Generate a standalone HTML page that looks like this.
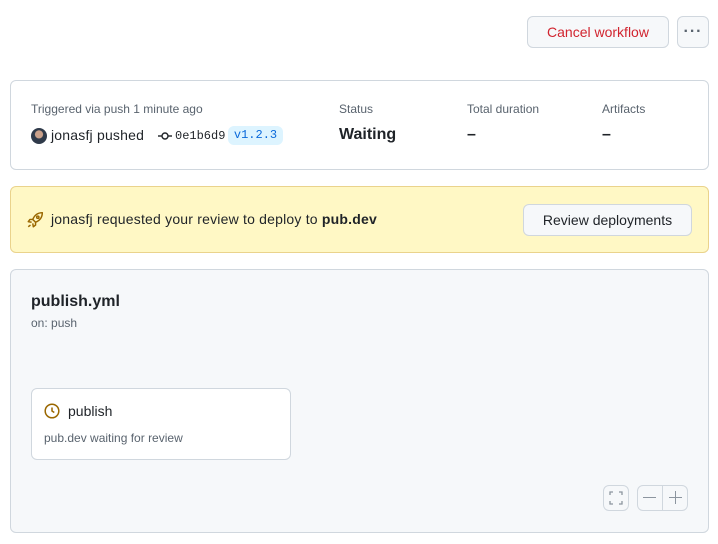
<!DOCTYPE html>
<html><head><style>
*{box-sizing:border-box;margin:0;padding:0}
body{width:718px;height:544px;background:#fff;font-family:"Liberation Sans",sans-serif;color:#1f2328;position:relative;overflow:hidden}
.a{position:absolute}
.btn{position:absolute;border:1px solid #d0d7de;border-radius:6px;background:#f6f8fa;font-size:14px;display:flex;align-items:center;justify-content:center}
.lbl{font-size:12px;color:#59636e}
.val{font-size:16px;font-weight:bold}
</style></head><body>
<div class="btn" style="left:527px;top:16px;width:142px;height:32px;color:#d1242f">Cancel workflow</div>
<div class="btn" style="left:677px;top:16px;width:32px;height:32px;font-size:16px;font-weight:bold;letter-spacing:1px;color:#59636e">···</div>

<div class="a" style="left:10px;top:80px;width:699px;height:90px;border:1px solid #d0d7de;border-radius:6px"></div>
<div class="a lbl" style="left:31px;top:102px">Triggered via push 1 minute ago</div>
<div class="a" style="left:31px;top:128px;width:16px;height:16px;border-radius:50%;background:radial-gradient(circle at 50% 40%,#c9a08a 0 30%,#2f3a4a 35%)"></div>
<div class="a" style="left:51px;top:127px;font-size:14px;letter-spacing:0.2px">jonasfj pushed</div>
<svg class="a" style="left:157px;top:130px" width="16" height="12" viewBox="0 0 16 12"><line x1="1" y1="6" x2="15" y2="6" stroke="#1f2328" stroke-width="1.4"/><circle cx="8" cy="6" r="3" fill="#fff" stroke="#1f2328" stroke-width="1.4"/></svg>
<div class="a" style="left:175px;top:129px;font-size:12px;font-family:'Liberation Mono',monospace">0e1b6d9</div>
<div class="a" style="left:228px;top:126px;width:55px;height:19px;background:#ddf4ff;border-radius:6px;color:#0969da;font-family:'Liberation Mono',monospace;font-size:12px;text-align:center;line-height:19px">v1.2.3</div>
<div class="a lbl" style="left:339px;top:102px">Status</div>
<div class="a val" style="left:339px;top:126px">Waiting</div>
<div class="a lbl" style="left:467px;top:102px">Total duration</div>
<div class="a val" style="left:467px;top:126px">–</div>
<div class="a lbl" style="left:602px;top:102px">Artifacts</div>
<div class="a val" style="left:602px;top:126px">–</div>

<div class="a" style="left:10px;top:186px;width:699px;height:67px;background:#fff8c5;border:1px solid #ead38c;border-radius:6px"></div>
<svg class="a" style="left:26px;top:211px" width="18" height="18" viewBox="0 0 16 16" fill="none" stroke="#9a6700" stroke-width="1.3" stroke-linejoin="round"><path d="M14.5 1.5c-4 0-7 2.5-8.5 6l2.5 2.5c3.5-1.5 6-4.5 6-8.5z"/><path d="M6 7.5H3.5L2 9.5l3 .5M8.5 10v2.5l-2 1.5-.5-3"/><path d="M4 12.5l-2 1.5"/><circle cx="10.5" cy="5.5" r="1"/></svg>
<div class="a" style="left:51px;top:211px;font-size:14px;letter-spacing:0.2px">jonasfj requested your review to deploy to <b>pub.dev</b></div>
<div class="btn" style="left:523px;top:204px;width:169px;height:32px">Review deployments</div>

<div class="a" style="left:10px;top:269px;width:699px;height:264px;background:#f6f8fa;border:1px solid #d0d7de;border-radius:6px"></div>
<div class="a" style="left:31px;top:293px;font-size:16px;font-weight:bold">publish.yml</div>
<div class="a lbl" style="left:31px;top:316px">on: push</div>
<div class="a" style="left:31px;top:388px;width:260px;height:72px;background:#fff;border:1px solid #d0d7de;border-radius:6px"></div>
<svg class="a" style="left:44px;top:403px" width="16" height="16" viewBox="0 0 16 16" fill="none" stroke="#9a6700" stroke-width="1.5"><circle cx="8" cy="8" r="6.8"/><path d="M8 4.5V8l2.3 1.5"/></svg>
<div class="a" style="left:68px;top:403px;font-size:14px">publish</div>
<div class="a lbl" style="left:44px;top:431px">pub.dev waiting for review</div>
<div class="btn" style="left:603px;top:485px;width:26px;height:26px;background:#f6f8fa"><svg width="14" height="14" viewBox="0 0 14 14" fill="none" stroke="#8c959f" stroke-width="1.3"><path d="M1 4V1h3M10 1h3v3M13 10v3h-3M4 13H1v-3"/></svg></div>
<div class="btn" style="left:637px;top:485px;width:51px;height:26px;background:#f6f8fa"></div>
<div class="a" style="left:662px;top:486px;width:1px;height:24px;background:#d0d7de"></div>
<div class="a" style="left:643px;top:497px;width:13px;height:1px;background:#8c959f"></div>
<div class="a" style="left:669px;top:497px;width:13px;height:1px;background:#8c959f"></div>
<div class="a" style="left:675px;top:491px;width:1px;height:13px;background:#8c959f"></div>
</body></html>
